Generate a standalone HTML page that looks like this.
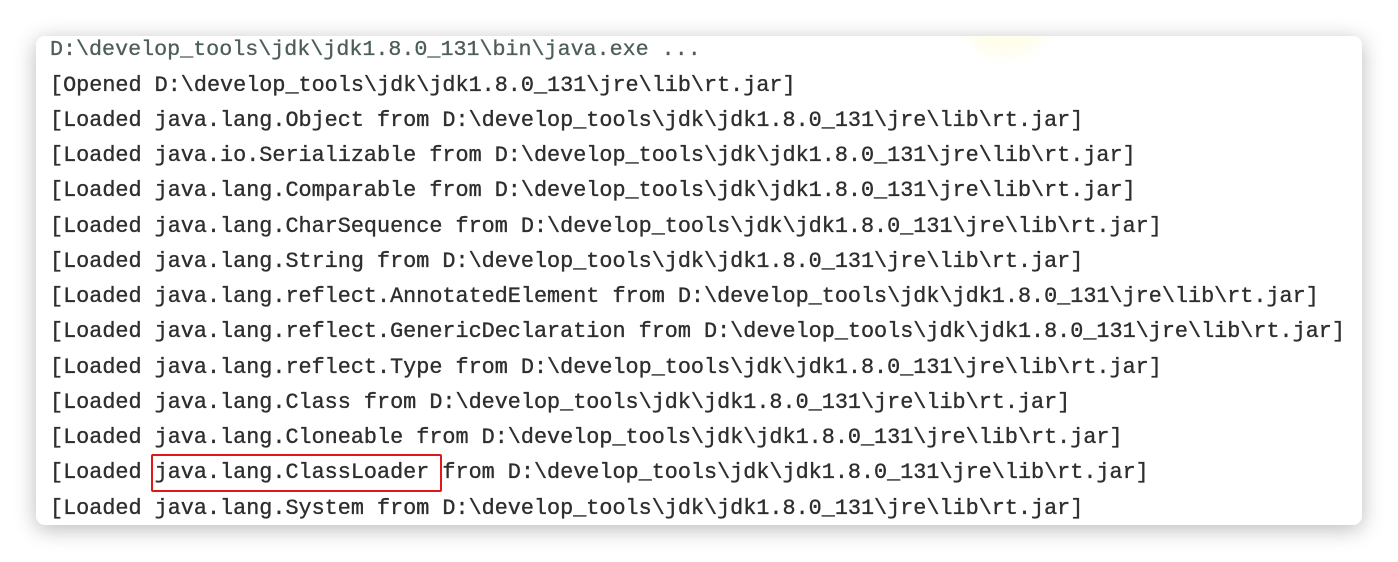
<!DOCTYPE html>
<html><head><meta charset="utf-8"><style>
html,body{margin:0;padding:0;background:#fff;width:1398px;height:562px;overflow:hidden}
.card{position:absolute;left:36px;top:36px;width:1326px;height:489px;background:#fff;border-radius:9px;box-shadow:0 4px 22px rgba(0,0,0,0.28);overflow:hidden}
.glow{position:absolute;left:930px;top:-40px;width:80px;height:60px;border-radius:50%;background:rgba(255,252,215,0.5);filter:blur(6px)}
.l{position:absolute;left:14px;font-family:"Liberation Mono",monospace;font-size:21.8px;color:#2e2e2e;white-space:pre;line-height:24px;-webkit-text-stroke:0.35px #2e2e2e;margin-top:1px}
.h{font-size:21.7px;color:#4d5e58;-webkit-text-stroke:0.3px #4d5e58}
.box{position:absolute;left:115px;top:418px;width:287px;height:34px;border:2px solid #e01818;border-radius:2px}
</style></head><body>
<div class="card">
<div class="glow"></div>
<div class="l h" style="top:1px">D:\develop_tools\jdk\jdk1.8.0_131\bin\java.exe ...</div>
<div class="l" style="top:37px">[Opened D:\develop_tools\jdk\jdk1.8.0_131\jre\lib\rt.jar]</div>
<div class="l" style="top:72px">[Loaded java.lang.Object from D:\develop_tools\jdk\jdk1.8.0_131\jre\lib\rt.jar]</div>
<div class="l" style="top:107px">[Loaded java.io.Serializable from D:\develop_tools\jdk\jdk1.8.0_131\jre\lib\rt.jar]</div>
<div class="l" style="top:142px">[Loaded java.lang.Comparable from D:\develop_tools\jdk\jdk1.8.0_131\jre\lib\rt.jar]</div>
<div class="l" style="top:178px">[Loaded java.lang.CharSequence from D:\develop_tools\jdk\jdk1.8.0_131\jre\lib\rt.jar]</div>
<div class="l" style="top:213px">[Loaded java.lang.String from D:\develop_tools\jdk\jdk1.8.0_131\jre\lib\rt.jar]</div>
<div class="l" style="top:248px">[Loaded java.lang.reflect.AnnotatedElement from D:\develop_tools\jdk\jdk1.8.0_131\jre\lib\rt.jar]</div>
<div class="l" style="top:283px">[Loaded java.lang.reflect.GenericDeclaration from D:\develop_tools\jdk\jdk1.8.0_131\jre\lib\rt.jar]</div>
<div class="l" style="top:319px">[Loaded java.lang.reflect.Type from D:\develop_tools\jdk\jdk1.8.0_131\jre\lib\rt.jar]</div>
<div class="l" style="top:354px">[Loaded java.lang.Class from D:\develop_tools\jdk\jdk1.8.0_131\jre\lib\rt.jar]</div>
<div class="l" style="top:389px">[Loaded java.lang.Cloneable from D:\develop_tools\jdk\jdk1.8.0_131\jre\lib\rt.jar]</div>
<div class="l" style="top:424px">[Loaded java.lang.ClassLoader from D:\develop_tools\jdk\jdk1.8.0_131\jre\lib\rt.jar]</div>
<div class="l" style="top:460px">[Loaded java.lang.System from D:\develop_tools\jdk\jdk1.8.0_131\jre\lib\rt.jar]</div>
<div class="box"></div>
</div>
</body></html>
